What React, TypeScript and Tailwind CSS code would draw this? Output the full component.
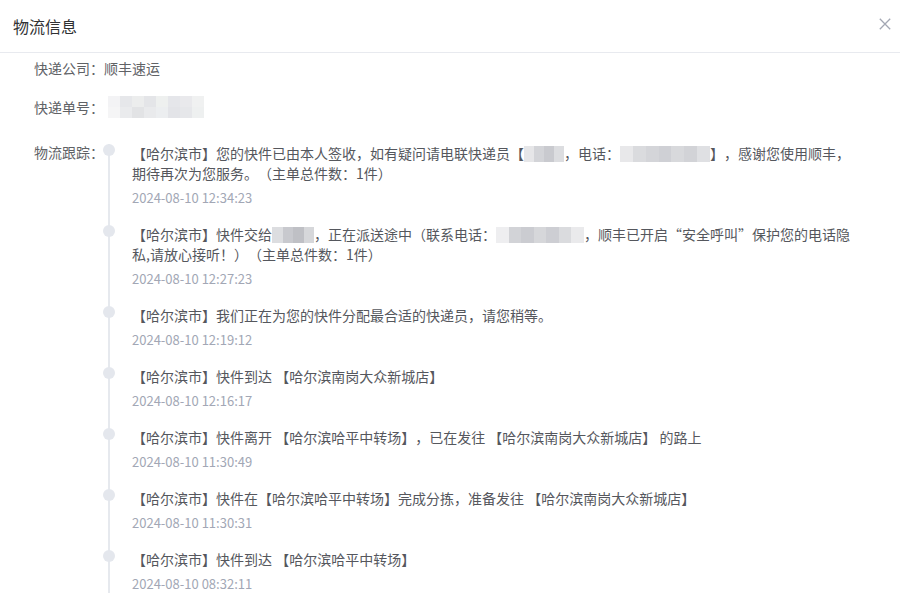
import React from "react";

const FONT = { fontFamily: '"Noto Sans CJK SC", "Noto Sans", sans-serif' };

function Blur({ w, tiles }: { w: number; tiles: string[] }) {
  return (
    <span
      className="inline-flex align-middle h-[16px] -mt-[3px]"
      style={{ width: w }}
    >
      {tiles.map((c, i) => (
        <span key={i} className="flex-1 h-full" style={{ background: c }} />
      ))}
    </span>
  );
}

type Item = { lines: React.ReactNode[]; time: string };

const items: Item[] = [
  {
    lines: [
      <>
        【哈尔滨市】您的快件已由本人签收，如有疑问请电联快递员【
        <Blur w={40} tiles={["#e6e6e8", "#d3d4d8", "#c9cacf", "#dcdde0"]} />
        ，电话：
        <Blur
          w={90}
          tiles={["#e8e8ea", "#dadbde", "#d4d5d9", "#cfd0d5", "#d8d9dc", "#d2d3d7", "#dfe0e3"]}
        />
        】，感谢您使用顺丰，
      </>,
      <>期待再次为您服务。（主单总件数：1件）</>,
    ],
    time: "2024-08-10 12:34:23",
  },
  {
    lines: [
      <>
        【哈尔滨市】快件交给
        <Blur w={42} tiles={["#dcdde0", "#c8c9ce", "#bfc0c5", "#d6d7da"]} />
        ，正在派送途中（联系电话：
        <Blur
          w={88}
          tiles={["#eeeef0", "#d2d3d7", "#cbccd1", "#d6d7da", "#cdced3", "#dadbde", "#eaeaec"]}
        />
        ，顺丰已开启“安全呼叫”保护您的电话隐
      </>,
      <>私,请放心接听！）（主单总件数：1件）</>,
    ],
    time: "2024-08-10 12:27:23",
  },
  {
    lines: [<>【哈尔滨市】我们正在为您的快件分配最合适的快递员，请您稍等。</>],
    time: "2024-08-10 12:19:12",
  },
  {
    lines: [<>【哈尔滨市】快件到达 【哈尔滨南岗大众新城店】</>],
    time: "2024-08-10 12:16:17",
  },
  {
    lines: [<>【哈尔滨市】快件离开 【哈尔滨哈平中转场】，已在发往 【哈尔滨南岗大众新城店】 的路上</>],
    time: "2024-08-10 11:30:49",
  },
  {
    lines: [<>【哈尔滨市】快件在【哈尔滨哈平中转场】完成分拣，准备发往 【哈尔滨南岗大众新城店】</>],
    time: "2024-08-10 11:30:31",
  },
  {
    lines: [<>【哈尔滨市】快件到达 【哈尔滨哈平中转场】</>],
    time: "2024-08-10 08:32:11",
  },
];

export default function App() {
  return (
    <div
      className="w-[900px] h-[593px] bg-white overflow-hidden [text-spacing-trim:space-all]"
      style={FONT}
    >
      <div className="h-[53px] flex items-center justify-between pl-[13px] pr-[9px] border-b border-[#e8eaef]">
        <span className="text-[16px] text-[#303133] leading-[20px] -mt-[1px]">物流信息</span>
        <svg width="12" height="12" viewBox="0 0 12 12" className="-mt-[5px]">
          <path d="M0.8 0.8 L11.2 11.2 M11.2 0.8 L0.8 11.2" stroke="#a3a7b3" strokeWidth="1.3" fill="none" />
        </svg>
      </div>

      <div className="pl-[34px] pt-[5px] text-[14px]">
        <div className="flex h-[20px] items-center leading-[20px]">
          <span className="w-[70px] text-[#606266]">快递公司：</span>
          <span className="text-[#606266]">顺丰速运</span>
        </div>
        <div className="flex h-[22px] items-center mt-[18px] leading-[20px]">
          <span className="w-[74px] text-[#606266]">快递单号：</span>
          <span className="inline-flex flex-col w-[96px] h-[22px]">
            <span className="flex flex-1">
              <span className="flex-1 bg-[#f3f3f5]" />
              <span className="flex-1 bg-[#e6e7ea]" />
              <span className="flex-1 bg-[#eceded]" />
              <span className="flex-1 bg-[#e4e5e8]" />
              <span className="flex-1 bg-[#eef0ef]" />
              <span className="flex-1 bg-[#e5e6ea]" />
              <span className="flex-1 bg-[#e9e9ec]" />
              <span className="flex-1 bg-[#f0f1f1]" />
            </span>
            <span className="flex flex-1">
              <span className="flex-1 bg-[#f5f5f6]" />
              <span className="flex-1 bg-[#eaebed]" />
              <span className="flex-1 bg-[#e2e3e5]" />
              <span className="flex-1 bg-[#e9eaec]" />
              <span className="flex-1 bg-[#eceef0]" />
              <span className="flex-1 bg-[#e3e4e8]" />
              <span className="flex-1 bg-[#e6e7ea]" />
              <span className="flex-1 bg-[#eef0f0]" />
            </span>
          </span>
        </div>
        <div className="flex items-start mt-[26px]">
          <span className="w-[70px] shrink-0 text-[#606266] leading-[20px] -mt-[2px]">物流跟踪：</span>
          <ul className="w-[780px]">
            {items.map((it, i) => (
              <li key={i} className="relative pb-[20px]">
                <div className="absolute left-[4px] top-0 h-full border-l-2 border-[#e6e9ee]" />
                <div className="absolute left-[-1px] top-0 w-[12px] h-[12px] rounded-full bg-[#e4e7ed]" />
                <div className="relative pl-[28px] -top-[1px]">
                  <div className="text-[#55575d] leading-[20px] whitespace-nowrap">
                    {it.lines.map((l, j) => (
                      <div key={j}>{l}</div>
                    ))}
                  </div>
                  <div className="mt-[8px] text-[13px] leading-[13px] text-[#a2a7b5]">{it.time}</div>
                </div>
              </li>
            ))}
          </ul>
        </div>
      </div>
    </div>
  );
}
